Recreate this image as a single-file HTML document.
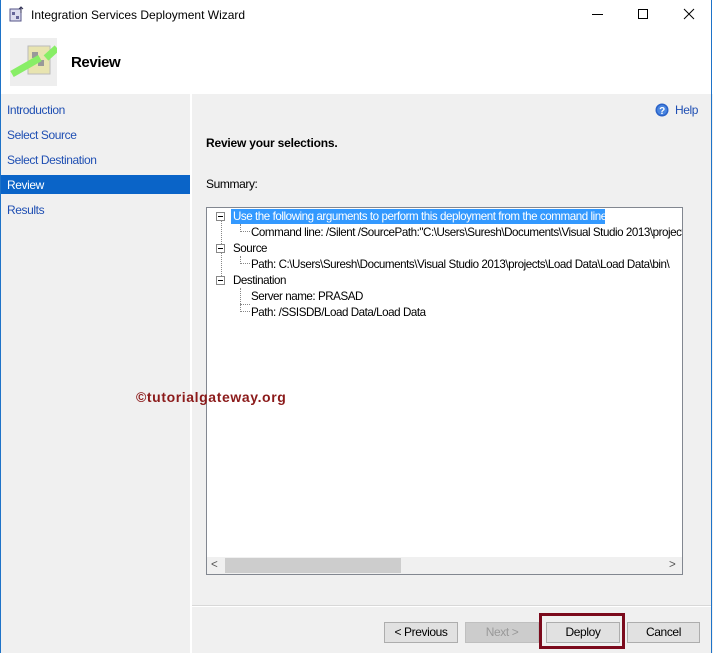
<!DOCTYPE html><html><head><style>
*{margin:0;padding:0;box-sizing:border-box}
body{width:713px;height:653px;position:relative;background:#f0f0f0;font-family:"Liberation Sans",sans-serif;font-size:12px;overflow:hidden;letter-spacing:-0.4px}
.a{position:absolute}
.nav{left:7px;font-size:12px}
.btn{position:absolute;top:622px;height:21px;background:#e1e1e1;border:1px solid #adadad;text-align:center;line-height:19px;font-size:12px}
.t{position:absolute;font-size:12px;white-space:nowrap;color:#000}
.tr .t{font-size:11.6px;letter-spacing:-0.45px}
</style></head><body>
<div class="a" style="left:0;top:0;width:713px;height:94px;background:#fff"></div>
<div class="a" style="left:0;top:0;width:1px;height:653px;background:#1e73c8"></div>
<div class="a" style="right:1px;top:0;width:1px;height:653px;background:#1e73c8"></div>
<svg class="a" style="left:9px;top:6px" width="16" height="16"><rect x="1" y="3" width="11" height="12" fill="#dde" stroke="#558"/><rect x="3" y="6" width="3" height="3" fill="#669"/><rect x="7" y="10" width="3" height="3" fill="#669"/><path d="M12 1v6M10 3l2-2 2 2" stroke="#335" fill="none"/></svg>
<div class="t" style="left:31px;top:8px;font-size:12px;letter-spacing:0">Integration Services Deployment Wizard</div>
<div class="a" style="left:592px;top:14px;width:11px;height:1px;background:#000"></div>
<div class="a" style="left:638px;top:9px;width:10px;height:10px;border:1px solid #000"></div>
<svg class="a" style="left:683px;top:8px" width="12" height="12"><path d="M1 1L11 11M11 1L1 11" stroke="#000"/></svg>
<svg class="a" style="left:10px;top:38px" width="47" height="48"><rect width="47" height="48" fill="#eee"/><rect x="18" y="8" width="22" height="28" fill="#e8e4b0" stroke="#bbb"/><rect x="22" y="14" width="6" height="6" fill="#999"/><rect x="28" y="22" width="6" height="6" fill="#999"/><path d="M2 36L30 20" stroke="#8e6" stroke-width="7"/><path d="M36 20L47 10" stroke="#8e6" stroke-width="7"/></svg>
<div class="t" style="left:71px;top:54px;font-size:15px;font-weight:bold">Review</div>
<div class="a" style="left:1px;top:94px;width:189px;height:559px;background:#f0f0f0"></div>
<div class="a" style="left:190px;top:94px;width:2px;height:559px;background:#fff"></div>
<div class="t nav" style="top:103px;color:#1f4fb3">Introduction</div>
<div class="t nav" style="top:128px;color:#1f4fb3">Select Source</div>
<div class="t nav" style="top:153px;color:#1f4fb3">Select Destination</div>
<div class="a" style="left:1px;top:175px;width:189px;height:19px;background:#0a64c8"></div>
<div class="t nav" style="top:178px;color:#fff">Review</div>
<div class="t nav" style="top:203px;color:#1f4fb3">Results</div>
<svg class="a" style="left:655px;top:103px" width="14" height="14"><circle cx="7" cy="7" r="6.5" fill="#2a62c8"/><circle cx="7" cy="7" r="5" fill="#4a86e0"/><text x="7" y="11" font-size="10" font-weight="bold" fill="#fff" text-anchor="middle" font-family="Liberation Sans">?</text></svg>
<div class="t" style="left:675px;top:103px;color:#1f4fb3">Help</div>
<div class="t" style="left:206px;top:136px;font-weight:bold;letter-spacing:-0.2px">Review your selections.</div>
<div class="t" style="left:206px;top:177px">Summary:</div>
<div class="a tr" style="left:206px;top:207px;width:477px;height:368px;background:#fff;border:1px solid #828790;overflow:hidden">
<div class="a" style="left:24px;top:1px;width:374px;height:15px;background:#3399ff"></div>
<div class="a" style="left:14px;top:12px;border-left:1px dotted #888;height:64px"></div>
<div class="a" style="left:33px;top:16px;border-left:1px dotted #888;height:8px;width:10px;border-bottom:1px dotted #888"></div>
<div class="a" style="left:33px;top:48px;border-left:1px dotted #888;height:8px;width:10px;border-bottom:1px dotted #888"></div>
<div class="a" style="left:33px;top:80px;border-left:1px dotted #888;height:24px;width:10px;border-bottom:1px dotted #888"></div>
<div class="a" style="left:33px;top:96px;width:10px;border-bottom:1px dotted #888"></div>
<div class="a" style="left:9px;top:4px;width:9px;height:9px;border:1px solid #888;background:#fff"><div style="margin:3px 1px;height:1px;background:#000"></div></div>
<div class="a" style="left:9px;top:36px;width:9px;height:9px;border:1px solid #888;background:#fff"><div style="margin:3px 1px;height:1px;background:#000"></div></div>
<div class="a" style="left:9px;top:68px;width:9px;height:9px;border:1px solid #888;background:#fff"><div style="margin:3px 1px;height:1px;background:#000"></div></div>
<div class="t" style="left:26px;top:2px;color:#fff">Use the following arguments to perform this deployment from the command line:</div>
<div class="t" style="left:44px;top:18px">Command line: /Silent /SourcePath:"C:\Users\Suresh\Documents\Visual Studio 2013\projects</div>
<div class="t" style="left:26px;top:34px">Source</div>
<div class="t" style="left:44px;top:50px">Path: C:\Users\Suresh\Documents\Visual Studio 2013\projects\Load Data\Load Data\bin\</div>
<div class="t" style="left:26px;top:66px">Destination</div>
<div class="t" style="left:44px;top:82px">Server name: PRASAD</div>
<div class="t" style="left:44px;top:98px">Path: /SSISDB/Load Data/Load Data</div>
<div class="a" style="left:0;top:349px;width:475px;height:17px;background:#f0f0f0"></div>
<div class="a" style="left:18px;top:350px;width:176px;height:15px;background:#cdcdcd"></div>
<div class="t" style="left:4px;top:350px;color:#555">&lt;</div>
<div class="t" style="left:462px;top:350px;color:#555">&gt;</div>
</div>
<div class="t" style="left:136px;top:389px;color:#8b1a1a;font-weight:bold;font-size:14px;letter-spacing:0.6px">©tutorialgateway.org</div>
<div class="a" style="left:192px;top:605px;width:519px;height:1px;background:#d8d8d8"></div>
<div class="a" style="left:192px;top:606px;width:519px;height:1px;background:#fff"></div>
<div class="btn" style="left:384px;width:74px">&lt; Previous</div>
<div class="btn" style="left:465px;width:74px;background:#ccc;border-color:#bfbfbf;color:#999">Next &gt;</div>
<div class="a" style="left:539px;top:613px;width:86px;height:36px;border:3px solid #7b0a1c"></div>
<div class="btn" style="left:546px;width:74px">Deploy</div>
<div class="btn" style="left:627px;width:73px">Cancel</div>
</body></html>
